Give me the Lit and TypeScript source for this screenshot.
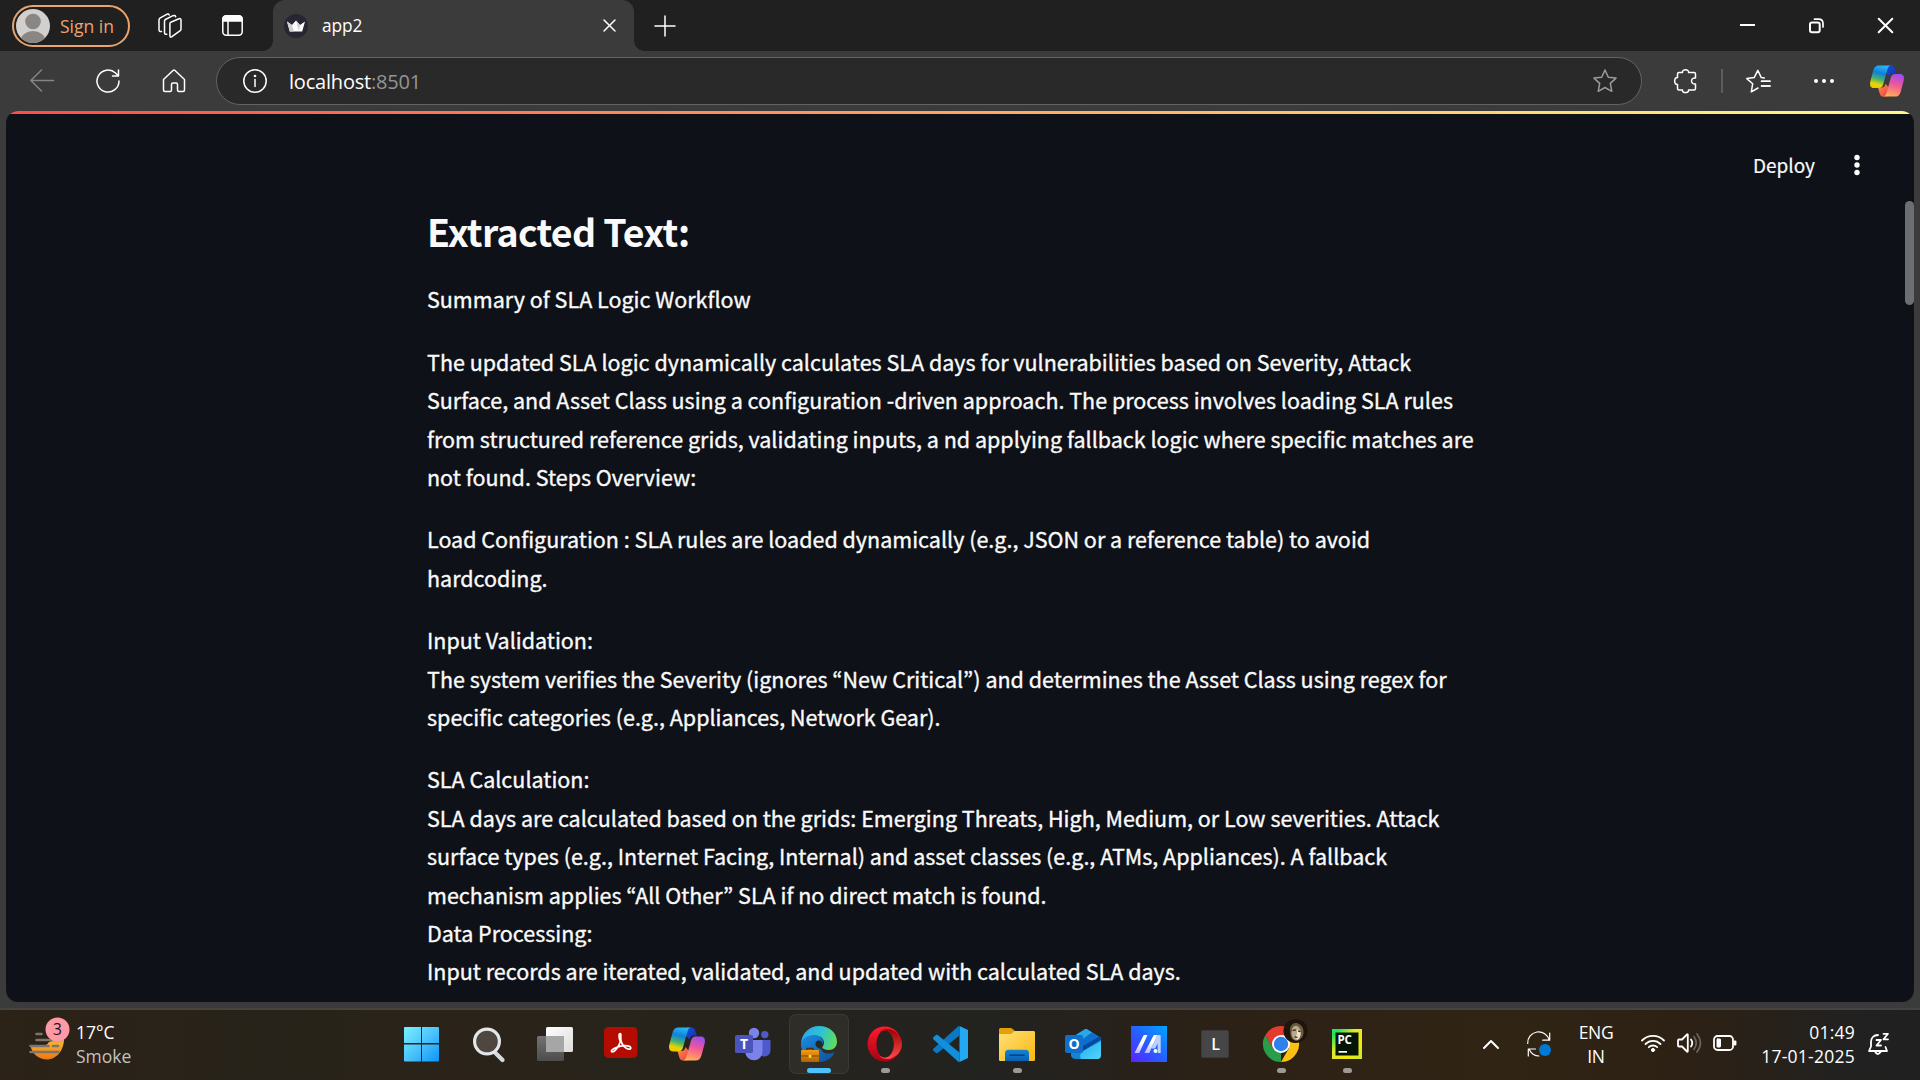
import { LitElement, html, svg, css } from "lit";
import { customElement } from "lit/decorators.js";

const PARAGRAPHS: string[][] = [
  ["Summary of SLA Logic Workflow"],
  [
    "The updated SLA logic dynamically calculates SLA days for vulnerabilities based on Severity, Attack",
    "Surface, and Asset Class using a configuration -driven approach. The process involves loading SLA rules",
    "from structured reference grids, validating inputs, a nd applying fallback logic where specific matches are",
    "not found. Steps Overview:",
  ],
  [
    "Load Configuration : SLA rules are loaded dynamically (e.g., JSON or a reference table) to avoid",
    "hardcoding.",
  ],
  [
    "Input Validation:",
    "The system verifies the Severity (ignores “New Critical”) and determines the Asset Class using regex for",
    "specific categories (e.g., Appliances, Network Gear).",
  ],
  [
    "SLA Calculation:",
    "SLA days are calculated based on the grids: Emerging Threats, High, Medium, or Low severities. Attack",
    "surface types (e.g., Internet Facing, Internal) and asset classes (e.g., ATMs, Appliances). A fallback",
    "mechanism applies “All Other” SLA if no direct match is found.",
    "Data Processing:",
    "Input records are iterated, validated, and updated with calculated SLA days.",
  ],
];

const copilot = (id: string) => svg`
  <defs>
    <linearGradient id="${id}a" x1="0.6" y1="0" x2="0.35" y2="1">
      <stop offset="0" stop-color="#2cb8f5"/><stop offset=".35" stop-color="#0f80dc"/>
      <stop offset=".62" stop-color="#49b26c"/><stop offset=".85" stop-color="#e8d600"/><stop offset="1" stop-color="#f5c400"/>
    </linearGradient>
    <linearGradient id="${id}b" x1="0.6" y1="0" x2="0.35" y2="1">
      <stop offset="0" stop-color="#a04df0"/><stop offset=".4" stop-color="#e855a0"/>
      <stop offset=".7" stop-color="#ff7a78"/><stop offset="1" stop-color="#ffb457"/>
    </linearGradient>
    <linearGradient id="${id}c" x1="0" y1="0" x2="1" y2="1">
      <stop offset="0" stop-color="#0a55d8"/><stop offset="1" stop-color="#1b2fb4"/>
    </linearGradient>
    <linearGradient id="${id}d" x1="0" y1="0" x2="1" y2="1">
      <stop offset="0" stop-color="#ff9640"/><stop offset="1" stop-color="#e8364a"/>
    </linearGradient>
  </defs>
  <path d="M18 1.500h4.500c2.200 0 3.200 1.500 3.800 3.500l1.400 4.500h-3c-2.400 0-3.500 1.500-4.200 4L16 9z" fill="url(#${id}c)"/>
  <path d="M18 34.500h-4c-2.200 0-3.200-1.600-3.800-3.600L8.500 25h4c2.400 0 3.300-1.500 4-4l5 6z" fill="url(#${id}d)"/>
  <path d="M9.500 1.500h13c-2.200 0-3.300 1.600-4 4l-4.600 16.200c-.8 2.500-2 3.800-4.400 3.800H4.200C.8 25.500-.6 23 .3 18.800L3.400 7C4.500 3.200 6.300 1.500 9.500 1.500z" fill="url(#${id}a)"/>
  <path d="M26.500 34.500h-13c2.200 0 3.300-1.600 4-4l4.600-16.200c.8-2.500 2-3.800 4.400-3.800h5.300c3.400 0 4.800 2.500 3.900 6.700L32.600 29c-1.100 3.800-2.900 5.500-6.100 5.500z" fill="url(#${id}b)"/>`;

const ICONS: Record<string, unknown> = {
  windows: svg`
    <defs><linearGradient id="wn" gradientUnits="userSpaceOnUse" x1="-1" y1="1" x2="34" y2="36">
      <stop offset="0" stop-color="#78f0ff"/><stop offset=".5" stop-color="#4cc4fb"/><stop offset="1" stop-color="#0c93f8"/>
    </linearGradient></defs>
    <path d="M0 1h16v16H-1V2a1 1 0 0 1 1-1zM17 1h16a1 1 0 0 1 1 1v15H17zM-1 18.500h17v17H0a1 1 0 0 1-1-1zM17 18.500h17v16a1 1 0 0 1-1 1H17z" fill="url(#wn)"/>`,
  search: svg`
    <path d="M23 25.500l8.500 8.500" stroke="#d5dade" stroke-width="4.200" stroke-linecap="round"/>
    <circle cx="16" cy="15.500" r="12.400" fill="#4e4740" stroke="#e3e7ea" stroke-width="3.200"/>`,
  tasks: svg`
    <defs><linearGradient id="tv" x1="0" y1="0" x2="1" y2="1"><stop offset="0" stop-color="#fff"/><stop offset="1" stop-color="#dcdcdc"/></linearGradient>
    <linearGradient id="tw" x1="0" y1="0" x2="0" y2="1"><stop offset="0" stop-color="#737373"/><stop offset="1" stop-color="#4c4c4c"/></linearGradient></defs>
    <rect x="0" y="10" width="27" height="25" rx="1.500" fill="url(#tw)"/>
    <rect x="9" y="1" width="27" height="25" rx="1.500" fill="url(#tv)"/>
    <path d="M9 10h18v16H10.500A1.500 1.500 0 0 1 9 24.500z" fill="#a6a6a6"/>`,
  acrobat: svg`
    <rect x="1" y="1" width="33.500" height="31" rx="4.500" fill="#b40c00"/>
    <path d="M17.300 7.500c-2 0-1.300 4.800 0 8.200-1.500 4-4 8-6.200 9.500-1.800 1.200-3.400.6-2.300-.9 1.600-2 7.500-4.300 12.500-4.600 3.300-.2 6.500.4 6.500 2.300 0 2-3.600 1.400-6-.8-2.800-2.500-4.300-6.300-4-10.500.1-2.100.1-3.200-.5-3.200z" fill="none" stroke="#fff" stroke-width="1.700" stroke-linejoin="round"/>`,
  copilot: copilot("cpt"),
  teams: svg`
    <circle cx="19" cy="7" r="5.200" fill="#7b83eb"/><circle cx="29.800" cy="8.600" r="3.700" fill="#5059c9"/>
    <path d="M24 14h11.500v10a6 6 0 0 1-6 6.500c-2 0-4-.6-5.500-2z" fill="#5059c9"/>
    <path d="M10 14h17.500v11.500A8.700 8.700 0 0 1 19 34.300 8.700 8.700 0 0 1 10.300 27z" fill="#7b83eb"/>
    <rect x="0" y="9" width="18" height="18" rx="1.600" fill="#4b53bc"/>
    <text x="9" y="23" text-anchor="middle" class="glyph" font-size="14" fill="#fff">T</text>`,
  edge: svg`
    <defs>
      <linearGradient id="ea" x1="0" y1=".4" x2="1" y2=".6"><stop offset="0" stop-color="#2fa7e8"/><stop offset=".5" stop-color="#2cc2d6"/><stop offset="1" stop-color="#62de57"/></linearGradient>
      <linearGradient id="eb" x1="0" y1="0" x2="1" y2="1"><stop offset="0" stop-color="#1b8ee0"/><stop offset="1" stop-color="#0d4f9c"/></linearGradient>
      <linearGradient id="ec" x1="0" y1="0" x2="0" y2="1"><stop offset="0" stop-color="#f59b14"/><stop offset="1" stop-color="#b06400"/></linearGradient>
    </defs>
    <path d="M.2 15.500C2.500 10 8 8.500 13 8.500c6 0 9 4.500 9 8 0 2-2 3-2 5.500 0 3.500 4 6 8.500 5.500 2.500-.3 4-1.200 4.700-1C33 30 27 36 18 36 8 36 0 28.500 0 18z" fill="url(#eb)"/>
    <path d="M.2 16C1.200 7 8.500 0 18 0c11 0 18 7.500 18 15.500C36 21 32.500 24 28 24c-4 0-6.700-1.500-6.700-2.700 0-.8 1.700-1.600 1.700-4.600 0-4-4-7.700-9.700-7.700C7 9 2.500 12 .2 16z" fill="url(#ea)"/>
    <path d="M21.500 17.500c.3 2-1.700 3.500-1.700 5.500-4.300-1-6.800-4.500-4.500-7.500 2-2 5.800-1 6.200 2z" fill="#282820"/>
    <path d="M6 24v-1.500h6V24" fill="none" stroke="#4a3116" stroke-width="1.600"/>
    <rect x="0" y="24" width="18" height="12" rx="1" fill="url(#ec)"/>
    <path d="M0 30h18" stroke="#8e4f00" stroke-width="1.200"/><rect x="7.700" y="28.800" width="2.600" height="2.800" fill="#ffe14d"/>`,
  opera: svg`
    <defs><linearGradient id="oa" x1="0" y1="0" x2="0" y2="1"><stop offset="0" stop-color="#ff1b2d"/><stop offset="1" stop-color="#a70014"/></linearGradient>
    <linearGradient id="ob" x1="0" y1="0" x2="0" y2="1"><stop offset="0" stop-color="#9c0000"/><stop offset="1" stop-color="#ff4b4b"/></linearGradient></defs>
    <path fill-rule="evenodd" d="M17.500.5a17 17.500 0 1 1 0 35 17 17.500 0 1 1 0-35zM18 4.500c-5 0-8.500 6-8.500 13.500S13 31.500 18 31.500 27 25.500 27 18 23 4.500 18 4.500z" fill="url(#oa)"/>
    <path d="M12 6.800C14.500 3 20 2.200 24 3.600 30.500 6 35 11.500 35 18s-4.500 12-11 14.400c-4 1.400-9.500.6-12-3.200C14 31 16 31.500 18 31.500c5 0 9-6 9-13.500S23 4.500 18 4.500c-2 0-4 .6-6 2.300z" fill="url(#ob)"/>`,
  vscode: svg`
    <path d="M26.500 0L35 4v28l-8.500 4z" fill="#23a8f2"/>
    <path d="M26.500 9.500L5 26.800c-.8.600-1.600.5-2.300 0L.6 25c-.8-.7-.8-1.800 0-2.500L25 .600c.5-.4 1-.6 1.500-.6z" fill="#0a78c2"/>
    <path d="M26.500 26.500L5 9.200c-.8-.6-1.600-.5-2.300 0L.6 11c-.8.700-.8 1.800 0 2.500L25 35.400c.5.4 1 .6 1.500.6z" fill="#118fdb"/>`,
  folder: svg`
    <defs><linearGradient id="fa" x1="0" y1="0" x2="1" y2="1"><stop offset="0" stop-color="#ffe07a"/><stop offset="1" stop-color="#f9b80b"/></linearGradient>
    <linearGradient id="fb" x1="0" y1="0" x2="0" y2="1"><stop offset="0" stop-color="#1286d8"/><stop offset="1" stop-color="#0a5fae"/></linearGradient></defs>
    <path d="M0 12V3.500C0 2.600.7 2 1.500 2h10c.7 0 1.300.2 1.800.7L16 5v4z" fill="#e3a007"/>
    <path d="M0 8h11c1 0 1.700-.3 2.400-1l1-1c.5-.6 1.200-1 2-1h18c1 0 1.600.7 1.600 1.600v26.800c0 1-.6 1.600-1.600 1.600H1.600C.6 35 0 34.400 0 33.400z" fill="url(#fa)"/>
    <path d="M6 35v-8c0-2 1.200-3.300 3.200-3.300h17.600c2 0 3.200 1.300 3.200 3.300v8z" fill="url(#fb)"/>
    <path d="M11 29.200h14" stroke="#063f7a" stroke-width="1.600" stroke-linecap="round"/>`,
  outlook: svg`
    <defs><linearGradient id="ol" x1="0" y1="0" x2="1" y2="1"><stop offset="0" stop-color="#2aa9ef"/><stop offset="1" stop-color="#4fd8f8"/></linearGradient></defs>
    <path d="M6 12L19.500 3.500c1-.6 2-.6 3 0L36 12v17c0 3-1.800 4-4 4H11c-3 0-5-1.500-5-4z" fill="#1583d6"/>
    <path d="M6 12L19.500 3.500c1-.6 2-.6 3 0L27 6.500 12 17H6z" fill="#28a8ea"/>
    <path d="M27 6.300L36 12v2L17 25V14z" fill="#0c70ca"/><path d="M36 13.500L18 25v-5l16.500-9.500z" fill="#07479c"/>
    <path d="M36 15v14c0 3-1.800 4-4 4H16c-2-4 0-7 3-8.500z" fill="url(#ol)"/>
    <rect x="0" y="9" width="18" height="18" rx="1.800" fill="#0f6fcb"/>
    <text x="9" y="23" text-anchor="middle" class="glyph" font-size="14" fill="#fff">O</text>`,
  asus: svg`
    <defs><linearGradient id="ma" x1="0" y1="1" x2="1" y2="0"><stop offset="0" stop-color="#5a22ff"/><stop offset=".5" stop-color="#2660ff"/><stop offset="1" stop-color="#00a6ff"/></linearGradient>
    <linearGradient id="mb" x1="0" y1="1" x2="0" y2="0"><stop offset="0" stop-color="#b7b5ff"/><stop offset=".6" stop-color="#fff"/></linearGradient></defs>
    <rect width="36" height="36" fill="url(#ma)"/>
    <path d="M3.500 27L12.500 9.500q.3-.5 1-.5h3L8.500 26.500q-.3.500-1 .5zM13.500 27L22.500 9.500q.3-.5 1-.5h3l-8 17.500q-.3.500-1 .5z" fill="url(#mb)"/>
    <path d="M26.300 9H29q.7 0 .7.700V27h-3v-9.500l-2.700 5h-3.500z" fill="#b9d2ff"/><circle cx="24.500" cy="25" r="2" fill="#fff"/>`,
  letter: svg`
    <rect x="4.500" y="4.500" width="27" height="27" rx="1.500" fill="#464646" stroke="#3b3a38"/>
    <text x="18.500" y="24.300" text-anchor="middle" class="glyph thin" font-size="16" fill="#fff">L</text>`,
  chrome: svg`
    <path d="M18 18L18 36A18 18 0 0 1 2.400 9L10.200 22.500z" fill="#2a9d4a"/>
    <path d="M18 9H33.600A18 18 0 0 1 18 36L25.800 22.500z" fill="#fdbf12"/>
    <path d="M18 9H33.600A18 18 0 0 0 2.400 9L10.200 22.500z" fill="#e33b2e"/>
    <circle cx="18" cy="18" r="9" fill="#fff"/><circle cx="18" cy="18" r="7.200" fill="#2f80ed"/>
    <circle cx="32.500" cy="5" r="12" fill="#1d140d"/>
    <path d="M27 2c1-4 5-6 8-4.500 4 1.500 6 5 5.500 10-.5 4-3.500 7-7.500 7.500-3-.5-5-3-5.500-6z" fill="#6b5a42"/>
    <path d="M29 3c1.500-3 4-4 6-2.500 2.500 2 3.500 5 2.500 8.500-.8 3-3 4.800-5 5-2.500-1-4-4-4-7z" fill="#b9aa8a"/>
    <path d="M34 4c2.500 0 4 2 3.500 5s-2 4.800-3.500 5c-1.500-2-1.500-4 0-6z" fill="#eee2c8"/>
    <path d="M29.500 4.500l3.500-.6M35 5.200l2.500.3M31.500 10.800l3 .5" stroke="#3a2c1e" stroke-width="1.300"/>`,
  pycharm: svg`
    <defs><linearGradient id="pa" x1="0" y1="0" x2="1" y2="1"><stop offset="0" stop-color="#2ee07a"/><stop offset=".12" stop-color="#22e552"/><stop offset=".4" stop-color="#d8ee2a"/><stop offset=".7" stop-color="#f3e90d"/><stop offset="1" stop-color="#c8e82c"/></linearGradient></defs>
    <rect x="3" y="3" width="30" height="30" fill="url(#pa)"/><rect x="6.500" y="6.500" width="23" height="23" fill="#041408"/>
    <text x="8.400" y="18" class="glyph" font-size="11.500" fill="#fff">PC</text>
    <rect x="9.500" y="25" width="8.500" height="1.700" fill="#fff"/>`,
};

const APPS: { icon: string; run?: boolean; active?: boolean }[] = [
  { icon: "windows" }, { icon: "search" }, { icon: "tasks" }, { icon: "acrobat" }, { icon: "copilot" },
  { icon: "teams" }, { icon: "edge", active: true }, { icon: "opera", run: true }, { icon: "vscode" },
  { icon: "folder", run: true }, { icon: "outlook" }, { icon: "asus" }, { icon: "letter" },
  { icon: "chrome", run: true }, { icon: "pycharm", run: true },
];

const STAR = "M12 1l3.300 7.200 7.700.9-5.700 5.300 1.500 7.900L12 18.500l-6.800 3.800 1.500-7.900L1 9.100l7.700-.9z";

@customElement("browser-chrome")
class BrowserChrome extends LitElement {
  static styles = css`
    :host { display: block; color: #fff; font-family: "Open Sans", "Noto Sans", sans-serif; }
    svg { display: block; overflow: visible; fill: none; stroke: #fff; stroke-width: 1.5; stroke-linecap: round; stroke-linejoin: round; flex: none; }
    .solid { stroke: none; }
    .titlebar { height: 51px; background: #202020; display: flex; align-items: center; box-sizing: border-box; padding-left: 12px; }
    .signin { box-sizing: border-box; width: 118px; height: 42px; border: 2px solid #e9a56d; border-radius: 21px; display: flex; align-items: center; gap: 10px; padding-left: 2px; color: #eda36b; font-size: 17.5px; white-space: nowrap; }
    .work { margin-left: 27px; }
    .pane { margin-left: 40px; }
    .tab { position: relative; margin-left: 30px; width: 361px; height: 51px; border-radius: 12px 12px 0 0; background: #3b3b3b; display: flex; align-items: center; box-sizing: border-box; padding: 0 18px 0 11px; font-size: 17.3px; }
    .tab::before, .tab::after { content: ""; position: absolute; bottom: 0; width: 10px; height: 10px; }
    .tab::before { left: -10px; background: radial-gradient(circle at 0 0, transparent 9.5px, #3b3b3b 10px); }
    .tab::after { right: -10px; background: radial-gradient(circle at 100% 0, transparent 9.5px, #3b3b3b 10px); }
    .name { flex: 1; margin-left: 14px; letter-spacing: -0.1px; }
    .plus { margin-left: 20px; }
    .controls { margin-left: auto; display: flex; gap: 54px; padding-right: 27px; }
    .toolbar { height: 60px; background: #3b3b3b; display: flex; align-items: center; padding-left: 30px; }
    .nav { display: flex; gap: 42px; }
    .address { margin-left: 30px; box-sizing: border-box; width: 1426px; height: 48px; border: 1px solid #636363; border-radius: 24px; background: #292929; display: flex; align-items: center; padding: 0 24px 0 26px; font-size: 20px; }
    .url { flex: 1; margin-left: 22px; letter-spacing: -0.2px; }
    .port { color: #949494; }
    .rule { width: 2px; height: 24px; background: #5c5c5c; margin: 0 23px 0 24px; }
    .tools { display: flex; align-items: center; margin-left: 32px; }
    .more { margin-left: 42px; }
    .pilot { margin-left: 36px; }
  `;
  render() {
    return html`
      <div class="titlebar">
        <div class="signin">
          <svg class="solid" width="34" height="34" viewBox="0 0 34 34">
            <defs><clipPath id="av"><circle cx="17" cy="17" r="17"/></clipPath></defs>
            <circle cx="17" cy="17" r="17" fill="#d2d0ce"/>
            <g clip-path="url(#av)" fill="#8a8684"><circle cx="17" cy="12.500" r="7.800"/><ellipse cx="17" cy="32" rx="12.500" ry="10"/></g>
          </svg><span>Sign in</span>
        </div>
        <svg class="work" width="25" height="24" viewBox="0 0 25 24">
          <path d="M13.700 8.300L22 4.700q2-.6 2 1.400V15q0 1.300-1.100 1.900l-8 5.800q-2 1.200-2-1V9.800q0-1.100.8-1.500z"/>
          <path d="M9.800 20.200q-2.300.6-2.300-1.700V7.300q0-1.500 1.300-2.100L16 1.700q2-.8 2.700 1"/>
          <path d="M4.500 17.500Q2 18 2 15.500V6q0-1.500 1.200-2.200L9.800.3q1.700-.8 2.400.7"/>
        </svg>
        <svg class="pane" width="21" height="21" viewBox="0 0 21 21"><rect x=".8" y=".8" width="19.400" height="19.400" rx="3.500"/><path d="M1 6V4q0-3 3-3h13q3 0 3 3v2z" fill="#fff"/><path d="M6 6v14"/></svg>
        <div class="tab">
          <svg class="solid" width="24" height="24" viewBox="0 0 24 24"><circle cx="12" cy="12" r="12" fill="#262730"/><path d="M3 7.500l5 3.500 4-4.500 4 4.500 5-3.500-2.800 10H5.800z" fill="#fff"/><path d="M3 7.500l5 3.500 2 6.500H5.800zM12 6.500l4 4.500-1 6.500z" fill="#cfcfd2"/></svg>
          <span class="name">app2</span>
          <svg width="13" height="13" viewBox="0 0 13 13"><path d="M1 1l11 11M12 1L1 12"/></svg>
        </div>
        <svg class="plus" width="22" height="22" viewBox="0 0 22 22"><path d="M11 1v20M1 11h20"/></svg>
        <div class="controls">
          <svg width="15" height="15" viewBox="0 0 15 15"><path d="M0 7h15" stroke-width="2" stroke-linecap="butt"/></svg>
          <svg width="15" height="15" viewBox="0 0 15 15"><rect x="1" y="4.500" width="9.700" height="9.700" rx="2" stroke-width="2"/><path d="M5.500 1.200h4q4.500 0 4.500 4.500V9" stroke-width="1.700"/></svg>
          <svg width="15" height="15" viewBox="0 0 15 15"><path d="M.7.700l13.600 13.600M14.300.7L.7 14.300" stroke-width="2"/></svg>
        </div>
      </div>
      <div class="toolbar">
        <div class="nav">
          <svg width="24" height="24" viewBox="0 0 24 24"><path d="M23.500 11.500H.8M11.500 1L.8 11.500 11.500 22" stroke="#858585"/></svg>
          <svg width="24" height="24" viewBox="0 0 24 24"><path d="M23 12A11 11 0 1 1 19.500 4L22.500 7M22.500 1v6h-6"/></svg>
          <svg width="24" height="24" viewBox="0 0 24 24"><path d="M1.500 10.500L11 1.500q1-.9 2 0l9.500 9v10.500q0 1.500-1.500 1.500h-4q-1.500 0-1.500-1.500v-5.500q0-1.500-1.500-1.500h-3q-1.500 0-1.500 1.500V21q0 1.500-1.500 1.500H3q-1.500 0-1.500-1.500z"/></svg>
        </div>
        <div class="address">
          <svg width="24" height="24" viewBox="0 0 24 24"><circle cx="12" cy="12" r="11.200"/><path d="M12 10.500v7"/><circle cx="12" cy="7" r=".6" fill="#fff"/></svg>
          <span class="url">localhost<span class="port">:8501</span></span>
          <svg width="24" height="24" viewBox="0 0 24 24"><path d="${STAR}" stroke="#9b9b9b"/></svg>
        </div>
        <div class="tools">
          <svg width="23" height="24" viewBox="0 0 23 24"><path d="M5 3.500h3.500C8 1.800 9.800.7 11.500.7s3.500 1.100 3 2.800H20q1.500 0 1.500 1.500v4c-2-.5-4 .8-4 3s2 3.500 4 3v4.500q0 1.500-1.500 1.500h-5.500c.5 1.500-1 2.500-3 2.500s-3.500-1-3-2.500H5q-1.500 0-1.500-1.500v-4C1.800 15.500.7 14 .7 12s1.100-3.500 2.800-3.500V5Q3.500 3.500 5 3.500z"/></svg>
          <div class="rule"></div>
          <svg width="24" height="24" viewBox="0 0 24 24"><path d="M12 18.700l-6.700 3.800 1.400-8.100L.8 9.300l7.400-1L11.800 1l3.500 7.300 3 .4M15.500 12H24M15.500 16.700H24M15.500 7.500" transform="translate(0 .3)"/><path d="M15.500 12.200H24M15.500 17H24"/></svg>
          <svg class="more solid" width="22" height="6" viewBox="0 0 22 6"><g fill="#fff"><circle cx="4" cy="3" r="2"/><circle cx="12" cy="3" r="2"/><circle cx="20" cy="3" r="2"/></g></svg>
          <svg class="pilot solid" width="34" height="34" viewBox="0 0 36 36">${copilot("cpb")}</svg>
        </div>
      </div>`;
  }
}

@customElement("page-view")
class PageView extends LitElement {
  static styles = css`
    :host { display: flex; flex-direction: column; background: #3b3b3b; height: 899px; box-sizing: border-box; padding: 0 6px 6px; border-bottom: 2px solid #47443f; font-family: "Noto Sans CJK KR", sans-serif; color: #fafafa; }
    .page { position: relative; flex: 1; min-height: 0; overflow: hidden; background: #0e1117; border-radius: 12px; display: flex; flex-direction: column; }
    .bar { height: 3px; flex: none; background: linear-gradient(90deg, #ff4b4b, #fffd80); }
    .actions { display: flex; justify-content: flex-end; align-items: center; gap: 39px; height: 102px; flex: none; padding-right: 54px; box-sizing: border-box; font-size: 19px; margin-bottom: -35px; -webkit-text-stroke: 0.2px #fafafa; }
    .actions span { padding-bottom: 2px; }
    svg { display: block; fill: #fff; }
    .content { margin-left: 421px; width: 1050px; }
    h2 { margin: 0; font-size: 37.5px; line-height: 50px; font-weight: 700; letter-spacing: -0.7px; padding-top: 25px; padding-bottom: 24.4px; }
    p { margin: 0 0 24px; font-size: 21.5px; line-height: 38.4px; white-space: nowrap; -webkit-text-stroke: 0.35px #fafafa; }
    .line { display: block; }
    .thumb { position: absolute; right: 0; top: 90px; width: 9px; height: 104px; border-radius: 5px; background: #6d6e72; }
  `;
  render() {
    return html`<div class="page">
      <div class="bar"></div>
      <div class="actions"><span>Deploy</span>
        <svg width="6" height="22" viewBox="0 0 6 22"><circle cx="3" cy="3.500" r="2.700"/><circle cx="3" cy="11" r="2.700"/><circle cx="3" cy="18.500" r="2.700"/></svg>
      </div>
      <div class="content">
        <h2>Extracted Text:</h2>
        ${PARAGRAPHS.map((p) => html`<p>${p.map((l) => html`<span class="line">${l}</span>`)}</p>`)}
      </div>
      <div class="thumb"></div>
    </div>`;
  }
}

@customElement("task-bar")
class TaskBar extends LitElement {
  static styles = css`
    :host { display: grid; grid-template-columns: 390px 990px 1fr; height: 70px; background: linear-gradient(90deg, #2c2217 0, #27231a 14%, #2b2319 24%, #25231d 40%, #222220 52%, #2c2116 64%, #302414 78%, #2d2115 88%, #222120 96%, #202020); color: #fff; font-family: "Open Sans", "Noto Sans", sans-serif; font-size: 17.5px; line-height: 24px; }
    svg { display: block; overflow: visible; flex: none; }
    .weather { display: flex; gap: 11px; padding: 10px 0 0 29px; }
    .weather svg { margin-top: 3px; }
    .smoke { color: #c3c1be; }
    .apps { display: flex; padding-top: 4px; }
    .cell { width: 66px; height: 60px; display: flex; justify-content: center; }
    .tile { position: relative; width: 60px; height: 60px; box-sizing: border-box; display: flex; justify-content: center; align-items: center; border-radius: 7px; }
    .tile.active { background: #2e2d27; box-shadow: inset 0 0 0 1px #3a3934; }
    .mark { position: absolute; bottom: 1px; width: 9px; height: 5px; border-radius: 3px; background: #9d9a96; }
    .active .mark { width: 24px; background: #4cc2ff; }
    .glyph { font-family: "Open Sans", sans-serif; font-weight: 700; }
    .thin { font-weight: 600; }
    .tray { display: flex; align-items: flex-start; }
    .tray svg { fill: none; stroke: #fff; stroke-width: 1.8; stroke-linecap: round; stroke-linejoin: round; }
    .tray .chev { margin: 30px 0 0 103px; }
    .sync { margin: 22px 0 0 28px; }
    .lang { width: 44px; margin: 11px 0 0 23px; text-align: center; line-height: 23.5px; letter-spacing: -0.4px; }
    .net { margin: 23px 0 0 23px; display: flex; gap: 12px; }
    .clock { width: 110px; margin: 10px 0 0 8px; text-align: right; letter-spacing: 0.25px; white-space: nowrap; }
    .bell { margin: 23px 0 0 13px; }
  `;
  render() {
    return html`
      <div class="weather">
        <svg width="36" height="44" viewBox="0 0 36 44">
          <defs><linearGradient id="sun" x1="0" y1="0" x2="0" y2="1"><stop offset="0" stop-color="#f8c23a"/><stop offset="1" stop-color="#ee7712"/></linearGradient></defs>
          <path d="M1.500 22.500Q16 26 20 19l15-4.500C35.500 28 27 36.500 18 36.500S2.500 30 1.500 22.500z" fill="url(#sun)"/>
          <g stroke="#7b7570" stroke-width="2.600" stroke-linecap="round"><path d="M7.500 11h5M7.500 17h25M1.500 23h18M24 23h5M1.500 29h28"/></g>
          <circle cx="28.500" cy="6.500" r="12" fill="#ff99a4"/>
          <text x="28.500" y="12" text-anchor="middle" font-size="15.500" fill="#1c1010">3</text>
        </svg>
        <div><div>17°C</div><div class="smoke">Smoke</div></div>
      </div>
      <div class="apps">
        ${APPS.map((a) => html`<div class="cell"><div class="tile ${a.active ? "active" : ""}">
          <svg width="36" height="36" viewBox="0 0 36 36">${ICONS[a.icon]}</svg>
          ${a.run || a.active ? html`<span class="mark"></span>` : ""}
        </div></div>`)}
      </div>
      <div class="tray">
        <svg class="chev" width="16" height="9" viewBox="0 0 16 9"><path d="M1 8l7-7 7 7" stroke-width="2"/></svg>
        <svg class="sync" width="24" height="25" viewBox="0 0 24 25"><path d="M.7 11.500A11 11 0 0 1 22.300 8M22.700 1v7.200h-7M12 24C8 24 4.500 21.800 2.500 18M1.300 24v-7h7.200" stroke-width="1.200"/><circle cx="18" cy="18" r="6" fill="#0078d7" stroke="none"/></svg>
        <div class="lang">ENG<br>IN</div>
        <div class="net">
          <svg width="24" height="20" viewBox="0 0 24 20"><path d="M1 7.500a15.600 15.600 0 0 1 22 0M4.500 11a10.600 10.600 0 0 1 15 0M7.800 14.200a6 6 0 0 1 8.400 0"/><circle cx="12" cy="17" r="1.600" fill="#fff" stroke-width="1"/></svg>
          <svg width="24" height="20" viewBox="0 0 24 20"><path d="M1 7.500q0-1 1-1h3l5-5q.8-.7.800.4v16.200q0 1.100-.8.400l-5-5H2q-1 0-1-1z"/><path d="M14 6.500q2.500 3.500 0 7"/><path d="M17 3.800q4.500 6.200 0 12.400M20 1q7 9 0 18" stroke="#6b6258"/></svg>
          <svg width="24" height="20" viewBox="0 0 24 20"><rect x="1" y="3" width="19" height="14" rx="3.500"/><rect x="4" y="6" width="3.500" height="8" rx=".5" fill="#fff" stroke-width="1"/><path d="M21.500 8.500h1v3h-1z" fill="#fff"/></svg>
        </div>
        <div class="clock">01:49<br>17-01-2025</div>
        <svg class="bell" width="22" height="22" viewBox="0 0 22 22"><path d="M10 2C5.500 2 3 5 3 9v4.500L1 18h18l-1.500-4M7 18.500q2.500 5 6 0"/><path d="M8.500 7h4.500l-4.500 5.500H13M15.500.800h4.500L15.500 6.300H20"/></svg>
      </div>`;
  }
}

@customElement("app-root")
class AppRoot extends LitElement {
  static styles = css`
    :host { display: block; width: 1920px; height: 1080px; overflow: hidden; background: #202020; }
  `;
  render() {
    return html`<browser-chrome></browser-chrome><page-view></page-view><task-bar></task-bar>`;
  }
}
